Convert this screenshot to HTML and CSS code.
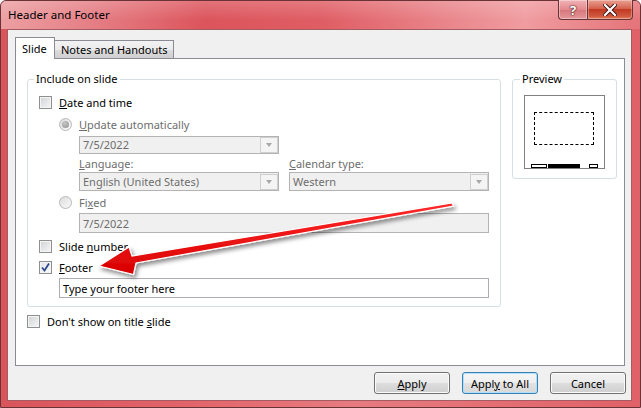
FILE: index.html
```html
<!DOCTYPE html>
<html>
<head>
<meta charset="utf-8">
<link rel="stylesheet" href="styles.css">
</head>
<body>
<div class="window">
  <div class="titlebar">
    <span class="title">Header and Footer</span>
    <div class="caption-btns">
      <div class="cbtn help">?</div>
      <div class="cbtn close">
        <svg width="14" height="12" viewBox="0 0 14 12"><path d="M2 1 L12 11 M12 1 L2 11" stroke="#3a1010" stroke-width="4" stroke-linecap="square"/><path d="M2 1 L12 11 M12 1 L2 11" stroke="#fff" stroke-width="2.2" stroke-linecap="square"/></svg>
      </div>
    </div>
  </div>
  <div class="client">
    <div class="tabs">
      <div class="tab active"><span>Slide</span></div>
      <div class="tab"><span>Notes and Handouts</span></div>
    </div>
    <div class="panel">
      <div class="groups">
        <fieldset class="group include">
          <legend>Include on slide</legend>
          <div class="row r-first"><span class="cb"></span><span><u>D</u>ate and time</span></div>
          <div class="row r-update dis"><span class="rb on"></span><span><u>U</u>pdate automatically</span></div>
          <div class="combo c-date"><span class="ctext">7/5/2022</span><span class="dd"></span></div>
          <div class="labels dis">
            <span class="lab"><u>L</u>anguage:</span>
            <span class="lab"><u>C</u>alendar type:</span>
          </div>
          <div class="combos">
            <div class="combo"><span class="ctext">English (United States)</span><span class="dd"></span></div>
            <div class="combo"><span class="ctext">Western</span><span class="dd"></span></div>
          </div>
          <div class="row r-fixed dis"><span class="rb"></span><span>Fi<u>x</u>ed</span></div>
          <div class="tb tb-fixed"><span>7/5/2022</span></div>
          <div class="row r-slide"><span class="cb"></span><span>Slide <u>n</u>umber</span></div>
          <div class="row r-footer"><span class="cb checked"><svg width="11" height="11" viewBox="0 0 11 11"><path d="M2 5.5 L4.5 8.5 L9 1.5" fill="none" stroke="#2e4a8c" stroke-width="1.8"/></svg></span><span><u>F</u>ooter</span></div>
          <div class="tb tb-footer"><span>Type your footer here</span></div>
        </fieldset>
        <fieldset class="group preview">
          <legend>Preview</legend>
          <div class="pv-box">
            <div class="pv-dash"></div>
            <div class="pv-bars">
              <span class="bar hollow b1"></span>
              <span class="bar solid"></span>
              <span class="bar hollow b3"></span>
            </div>
          </div>
        </fieldset>
      </div>
      <div class="row r-dont"><span class="cb"></span><span>Don't show on title <u>s</u>lide</span></div>
    </div>
    <div class="buttons">
      <div class="btn"><span><u>A</u>pply</span></div>
      <div class="btn default"><span>Appl<u>y</u> to All</span></div>
      <div class="btn"><span>Cancel</span></div>
    </div>
  </div>
  <svg class="arrow" width="641" height="408" viewBox="0 0 641 408">
    <defs>
      <linearGradient id="ag" x1="0" y1="0" x2="0" y2="1">
        <stop offset="0" stop-color="#ff2a2a"/>
        <stop offset="1" stop-color="#d80000"/>
      </linearGradient>
      <filter id="sh" x="-10%" y="-30%" width="130%" height="180%">
        <feDropShadow dx="2" dy="3" stdDeviation="2" flood-color="#000" flood-opacity="0.45"/>
      </filter>
    </defs>
    <polygon points="99,266 129,247 132,256 452,203 453.5,206 136,263 133.5,274.5" fill="url(#ag)" stroke="#fff" stroke-width="1.2" stroke-linejoin="miter" filter="url(#sh)"/>
  </svg>
</div>
</body>
</html>
```
FILE: styles.css
```css
* { box-sizing: border-box; }
html, body { margin: 0; padding: 0; }
body {
  width: 641px;
  height: 408px;
  overflow: hidden;
  background: #fff;
  font-family: "Noto Sans", "Open Sans", sans-serif;
  font-size: 11px;
  color: #000;
}
u { text-decoration: underline; text-underline-offset: 1px; }

.window {
  position: relative;
  width: 641px;
  height: 408px;
  border: 1px solid #6a3437;
  border-radius: 6px 6px 0 0;
  background: linear-gradient(90deg, #d9545b 0%, #e2656b 30%, #e77b80 55%, #e06168 100%);
  display: flex;
  flex-direction: column;
}

.titlebar {
  height: 28px;
  display: flex;
  justify-content: space-between;
  align-items: flex-start;
  border-radius: 5px 5px 0 0;
  background:
    linear-gradient(180deg, rgba(255,255,255,0.18), rgba(255,255,255,0) 70%),
    linear-gradient(90deg, #ec9fa2 0%, #e6848a 12%, #dc545c 32%, #df5d64 50%, #e9868b 70%, #f09ca0 82%, #e47479 100%);
}
.title {
  padding: 6px 0 0 7px;
  line-height: 16px;
  font-size: 11.5px;
  color: #000;
}
.caption-btns {
  display: flex;
  margin-top: -1px;
  margin-right: 7px;
}
.cbtn {
  height: 20px;
  display: flex;
  align-items: center;
  justify-content: center;
  border: 1px solid #6a3437;
  border-top: none;
}
.help {
  width: 29px;
  border-radius: 0 0 0 4px;
  border-right: none;
  background: linear-gradient(180deg, #f0b3b5 0%, #e3898d 50%, #d7767a 51%, #e4989b 100%);
  color: #fff;
  font-weight: bold;
  font-size: 13px;
  text-shadow: 0 0 2px #3a1010, 0 0 1px #3a1010;
  box-shadow: inset 0 0 0 1px rgba(255,255,255,0.35);
}
.close {
  width: 46px;
  border-radius: 0 0 4px 0;
  background: linear-gradient(180deg, #e9a193 0%, #d5624f 45%, #c23a22 50%, #d0583f 85%, #e5845f 100%);
  box-shadow: inset 0 0 0 1px rgba(255,255,255,0.3);
}

.client {
  flex: 1;
  margin: 0 8px 6px 6px;
  background: #f0f0f0;
  border: 1px solid #a35d62;
  padding: 7px 6px 0 7px;
  display: flex;
  flex-direction: column;
}

.tabs {
  display: flex;
  align-items: flex-end;
  height: 22px;
  margin-bottom: -1px;
  position: relative;
  z-index: 1;
}
.tab {
  flex: none;
  white-space: nowrap;
  border: 1px solid #898c95;
  padding: 0 0 0 6px;
  display: flex;
  align-items: center;
}
.tab.active {
  width: 40px;
  height: 22px;
  background: #fff;
  border-bottom: none;
  padding-bottom: 1px;
}
.tab:not(.active) {
  width: 119px;
  height: 19px;
  border-left: none;
  background: linear-gradient(180deg, #f2f2f2 0%, #ebebeb 50%, #dddddd 51%, #cfcfcf 100%);
}

.panel {
  width: 610px;
  height: 308px;
  background: #fff;
  border: 1px solid #898c95;
  padding: 12px 0 0 11px;
}
.groups {
  display: flex;
  gap: 11px;
  align-items: flex-start;
}
.group {
  margin: 0;
  min-width: 0;
  border: 1px solid #d5dfe5;
  border-radius: 3px;
  padding: 8px 0 8px 11px;
}
.group legend {
  padding: 0 2px;
  margin-left: -5px;
  line-height: 16px;
  font-size: 11px;
}
.include { width: 474px; }
.preview { width: 105px; padding-bottom: 9px; }
.preview legend { margin-left: -4px; }

.row {
  display: flex;
  align-items: center;
  height: 16px;
  gap: 7px;
  white-space: nowrap;
}
.dis { color: #6d6d6d; }
.r-first { margin-top: -1px; }
.r-update { margin: 6px 0 0 20px; }
.r-fixed { margin: 3px 0 0 20px; }
.r-slide { margin-top: 5px; }
.r-footer { margin-top: 5px; }
.r-dont { margin-top: 6px; }

.cb {
  width: 13px;
  height: 13px;
  flex: none;
  border: 1px solid #8e8f8f;
  background: linear-gradient(135deg, #cfd2d6 0%, #f7f7f7 100%);
  box-shadow: inset 0 0 0 1px #f4f4f4;
  display: flex;
  align-items: center;
  justify-content: center;
}
.cb.checked { background: linear-gradient(135deg, #dfe3ea 0%, #fbfbfb 100%); }

.rb {
  width: 13px;
  height: 13px;
  flex: none;
  border-radius: 50%;
  border: 1px solid #b8b8b8;
  background: linear-gradient(135deg, #dcdcdc, #fafafa);
  display: flex;
  align-items: center;
  justify-content: center;
}
.rb.on::after {
  content: "";
  width: 7px;
  height: 7px;
  border-radius: 50%;
  background: radial-gradient(circle at 40% 35%, #c8c8c8, #8e8e8e);
}

.combo {
  width: 200px;
  height: 18px;
  border: 1px solid #b3b3b3;
  background: #f0f0f0;
  display: flex;
  align-items: center;
  justify-content: space-between;
  color: #6d6d6d;
  padding-left: 3px;
  white-space: nowrap;
}
.c-date { margin: 4px 0 0 40px; }
.combo .ctext { line-height: 16px; }
.dd {
  width: 18px;
  height: 16px;
  border: 1px solid #cfcfcf;
  background: #f4f4f4;
  display: flex;
  align-items: center;
  justify-content: center;
}
.dd::after {
  content: "";
  border-left: 3.5px solid transparent;
  border-right: 3.5px solid transparent;
  border-top: 4px solid #a8a8a8;
}

.labels {
  display: flex;
  gap: 10px;
  margin: 2px 0 0 40px;
  height: 16px;
  line-height: 16px;
}
.lab { width: 200px; }
.combos {
  display: flex;
  gap: 10px;
  margin-left: 40px;
}
.combos .combo { height: 19px; }

.tb {
  height: 20px;
  border: 1px solid #abadb3;
  display: flex;
  align-items: center;
  padding-left: 3px;
  white-space: nowrap;
}
.tb-fixed {
  width: 410px;
  margin: 3px 0 0 40px;
  background: #f0f0f0;
  color: #6d6d6d;
  border-color: #b3b3b3;
}
.tb-footer {
  width: 430px;
  margin: 3px 0 0 20px;
  background: #fff;
  color: #000;
}

.pv-box {
  width: 81px;
  height: 74px;
  border: 1px solid #808080;
  background: #fff;
  display: flex;
  flex-direction: column;
  padding: 16px 0 0 9px;
}
.pv-dash {
  width: 60px;
  height: 33px;
  border: 1px dashed #000;
}
.pv-bars {
  margin-top: auto;
  margin-left: -3px;
  display: flex;
  height: 4px;
}
.bar { height: 4px; display: block; }
.bar.hollow { border: 1px solid #000; background: #fff; }
.bar.b1 { width: 16px; }
.bar.solid { width: 32px; background: #000; margin-left: 1px; }
.bar.b3 { width: 9px; margin-left: 9px; }

.buttons {
  display: flex;
  justify-content: flex-end;
  gap: 12px;
  margin: 6px -1px 0 0;
}
.btn {
  width: 76px;
  height: 22px;
  border: 1px solid #707070;
  border-radius: 3px;
  background: linear-gradient(180deg, #f2f2f2 0%, #ebebeb 50%, #dddddd 51%, #cfcfcf 100%);
  box-shadow: inset 0 0 0 1px #fbfbfb;
  display: flex;
  align-items: center;
  justify-content: center;
  white-space: nowrap;
}
.btn.default {
  border-color: #3c7fb1;
  box-shadow: inset 0 0 0 1px #aee1f9;
  background: linear-gradient(180deg, #f6f6f6 0%, #eeeeee 50%, #e2e2e2 51%, #d8d8d8 100%);
}

.arrow {
  position: absolute;
  left: -1px;
  top: -1px;
  pointer-events: none;
}
```
